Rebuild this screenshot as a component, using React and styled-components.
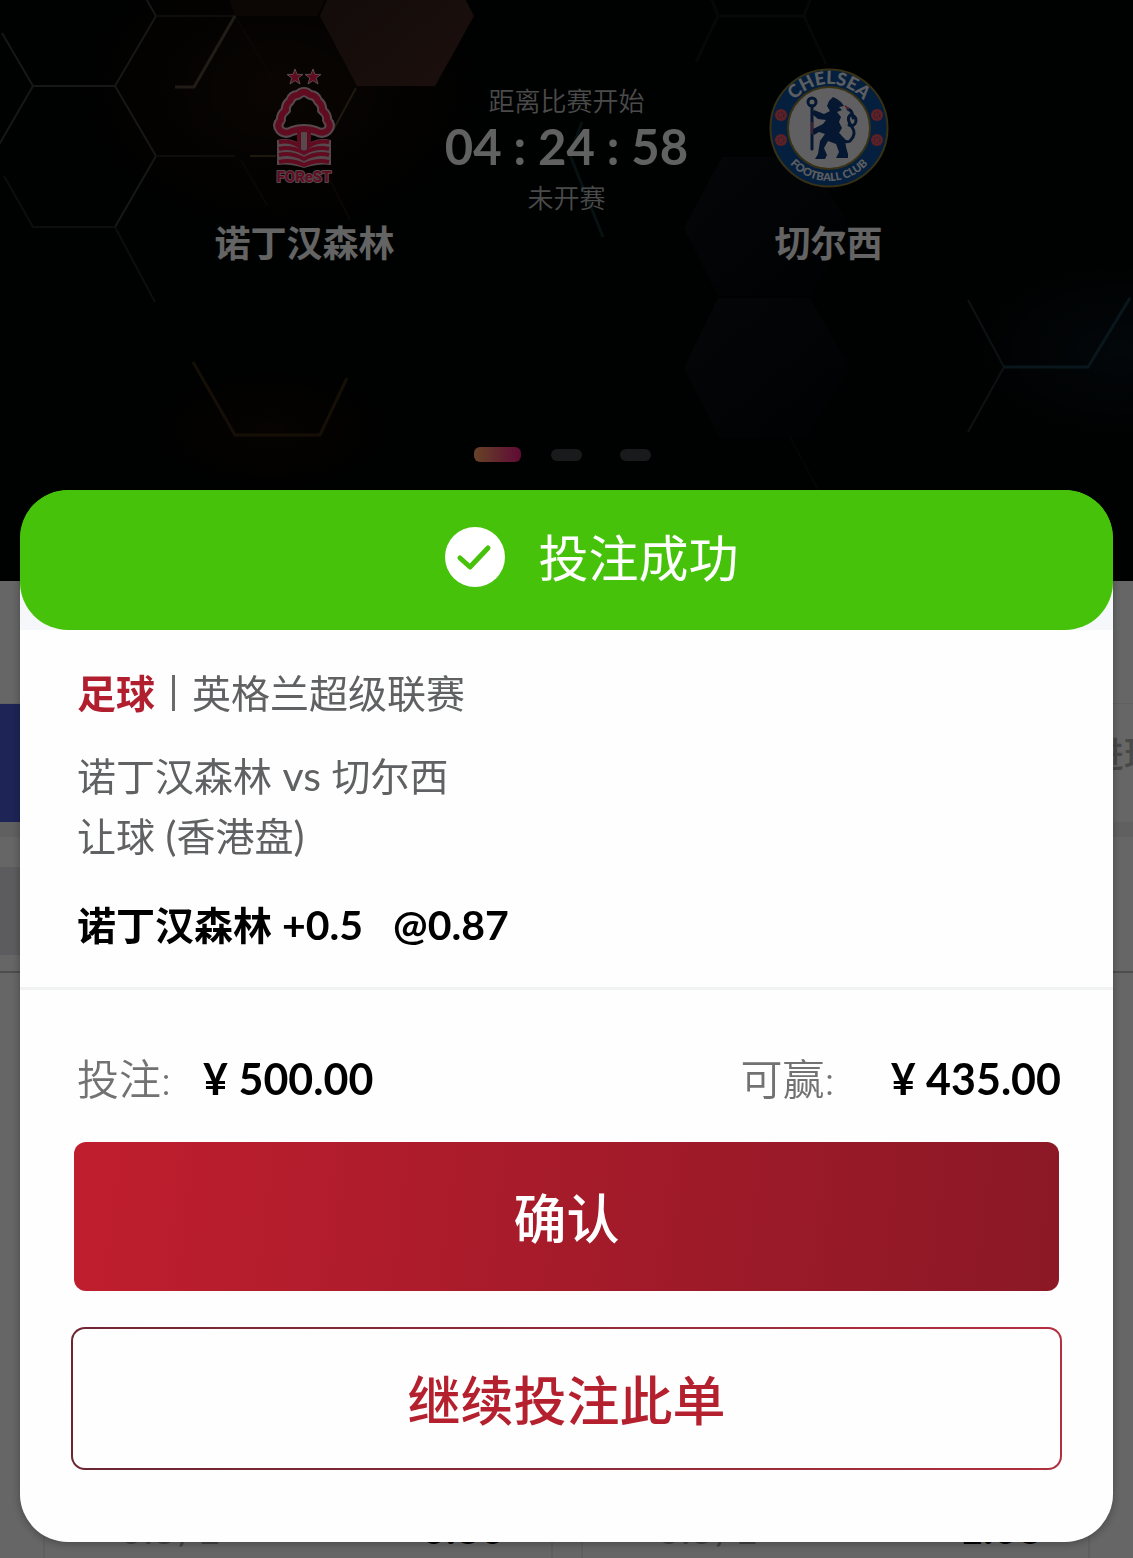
import React from "react";
import styled, { createGlobalStyle, css } from "styled-components";

const Global = createGlobalStyle`
  * { box-sizing: border-box; }
  html, body { margin: 0; padding: 0; background: #fff; }
  body {
    font-family: Lato, "Noto Sans CJK SC", sans-serif;
    overflow: hidden;
  }
  button { font-family: inherit; cursor: pointer; }
`;

const Page = styled.div`
  height: 100vh;
  overflow: hidden;
  background: #fff;
`;

/* ---------- match banner ---------- */

const Banner = styled.header`
  position: relative;
  height: 581px;
  background: #020303;
  color: #fff;
  display: flex;
  flex-direction: column;
  justify-content: space-between;
  padding: 68px 0 119px;
`;

const Backdrop = styled.svg`
  position: absolute;
  inset: 0;
  width: 100%;
  height: 100%;
`;

const MatchRow = styled.div`
  position: relative;
  display: grid;
  grid-template-columns: repeat(3, 262px);
  justify-content: center;
`;

const Team = styled.div`
  display: flex;
  flex-direction: column;
  align-items: center;
  gap: 31px;
  svg { width: 120px; height: 120px; }
`;

const TeamName = styled.h2`
  margin: 0;
  font-size: 36px;
  line-height: 48px;
  font-weight: 700;
  white-space: nowrap;
  color: #fbfbfb;
`;

const Countdown = styled.div`
  display: flex;
  flex-direction: column;
  align-items: center;
  padding-top: 14px;
`;

const Caption = styled.span`
  font-size: 26px;
  line-height: 38px;
  font-weight: 350;
  color: #b8b8b8;
`;

const Clock = styled.time`
  font-size: 49px;
  line-height: 52px;
  margin-bottom: 7px;
  font-weight: 700;
  color: #f2f2f2;
`;

const Dots = styled.div`
  position: relative;
  display: grid;
  grid-template-columns: repeat(3, 69px);
  justify-content: center;
  align-items: center;
  justify-items: center;
`;

const Dot = styled.button`
  border: 0;
  padding: 0;
  width: ${(p) => (p.$active ? 47 : 31)}px;
  height: ${(p) => (p.$active ? 15 : 12)}px;
  border-radius: 6px;
  background: ${(p) =>
    p.$active ? "linear-gradient(90deg, #ffa860, #ee1a84)" : "#404244"};
`;

/* ---------- odds page behind the dialog ---------- */

const Tabs = styled.nav`
  margin-top: 122px;
  height: 119px;
  display: flex;
  justify-content: space-between;
  border-top: 1px solid #efefef;
`;

const Tab = styled.button`
  display: flex;
  align-items: center;
  flex: none;
  border: 0;
  padding: 0;
  width: 172px;
  font-size: 36px;
  line-height: 48px;
  font-weight: 500;
  text-align: left;
  padding-bottom: 18px;
  background: ${(p) => (p.$active ? "#4a5cd6" : "transparent")};
  color: ${(p) => (p.$active ? "#fff" : "#b4b4b4")};
`;

const TabClip = styled.div`
  width: 45px;
  overflow: hidden;
  display: flex;
`;

const Strip = styled.div`
  height: 15px;
  background: #f0f0f1;
`;

const League = styled.div`
  margin-top: 30px;
  width: 50%;
  height: 88px;
  background: #e6e7ea;
`;

const Rule = styled.hr`
  margin: 16px 0 0;
  border: 0;
  height: 2px;
  background: #bcc0c5;
`;

const OddsGrid = styled.div`
  display: grid;
  grid-template-columns: 1fr 1fr;
  gap: 28px;
  padding: 0 43px;
`;

const OddsCard = styled.div`
  height: 640px;
  border: solid #ededee;
  border-width: 0 2px;
  display: flex;
  justify-content: space-between;
  align-items: baseline;
  padding: 529px 46px 0 74px;
  font-size: 42px;
  line-height: 52px;
  color: #a8a8a8;
  b { color: #000; font-weight: 900; }
`;

/* ---------- dialog ---------- */

const Overlay = styled.div`
  position: fixed;
  inset: 0;
  display: flex;
  align-items: flex-end;
  padding: 16px 20px;
  background: rgba(0, 0, 0, 0.6);
`;

const Dialog = styled.section`
  flex: 1;
  border-radius: 48px;
  background: linear-gradient(#45c209 70px, #f5f7fa 70px 140px, #fefefe 140px);
  box-shadow: 0 2px 10px rgba(0, 0, 0, 0.3);
  overflow: hidden;
`;

const DialogHeader = styled.header`
  display: flex;
  align-items: center;
  justify-content: center;
  gap: 34px;
  height: 140px;
  padding: 0 0 6px 50px;
  border-radius: 48px;
  background: #45c209;
  svg { width: 60px; height: 60px; }
`;

const Title = styled.h1`
  margin: 0;
  font-size: 50px;
  line-height: 60px;
  padding-top: 2px;
  font-weight: 400;
  color: #fff;
`;

const Details = styled.div`
  padding: 33px 57px 32px;
  border-bottom: 3px solid #f1f2f2;
  font-size: 39px;
  line-height: 60px;
  color: #606162;
`;

const Competition = styled.p`
  margin: 0 0 23px;
  display: flex;
  align-items: center;
  gap: 17px;
  strong { color: #b11f2e; }
`;

const Bar = styled.span`
  width: 3px;
  height: 36px;
  background: #6a6a6a;
`;

const Line = styled.p`
  margin: 0;
`;

const Latin = styled.span`
  font-size: 41px;
`;

const Pick = styled.p`
  margin: 29px 0 0;
  display: flex;
  align-items: baseline;
  gap: 30px;
  font-weight: 700;
  color: #000;
`;

const Amounts = styled.dl`
  margin: 0;
  padding: 59px 52px 0 57px;
  display: flex;
  justify-content: space-between;
  line-height: 60px;
`;

const Amount = styled.div`
  display: flex;
  align-items: baseline;
  gap: ${(p) => p.$gap}px;
  dt { font-size: 42px; color: #727272; font-weight: 350; }
  dd { margin: 0; font-size: 43px; font-weight: 700; color: #000; }
`;

const Actions = styled.div`
  display: flex;
  flex-direction: column;
  gap: 36px;
  padding: 33px 51px 72px;
`;

const buttonText = css`
  font-size: 53px;
  line-height: 72px;
  font-weight: 500;
  padding: 4px 0 0;
`;

const Confirm = styled.button`
  ${buttonText}
  height: 149px;
  margin: 0 3px;
  border: 0;
  border-radius: 12px;
  color: #fff;
  background: linear-gradient(97deg, #bf1e2e 2%, #8c1826 98%);
`;

const Continue = styled.button`
  ${buttonText}
  height: 143px;
  border: 2px solid transparent;
  border-radius: 14px;
  color: #b5202f;
  background:
    linear-gradient(#fefefe, #fefefe) padding-box,
    linear-gradient(60deg, #6b2532, #b5303f) border-box;
`;

/* ---------- drawings ---------- */

function Hexagons() {
  return (
    <Backdrop viewBox="0 0 1133 581" preserveAspectRatio="xMidYMin slice" fill="none" aria-hidden="true">
      <defs>
        <linearGradient id="warm" x1="0" y1="0" x2="1" y2="1">
          <stop offset="0" stopColor="#2c1d1a" />
          <stop offset="1" stopColor="#46281f" />
        </linearGradient>
        <linearGradient id="cool" x1="0" y1="0" x2="1" y2="1">
          <stop offset="0" stopColor="#0b1014" />
          <stop offset="1" stopColor="#020406" />
        </linearGradient>
        <radialGradient id="glow">
          <stop offset="0" stopColor="#1a0e07" />
          <stop offset="1" stopColor="#1a0e07" stopOpacity="0" />
        </radialGradient>
        <radialGradient id="blueGlow">
          <stop offset="0" stopColor="#07131a" />
          <stop offset="1" stopColor="#07131a" stopOpacity="0" />
        </radialGradient>
      </defs>
      <ellipse cx="280" cy="90" rx="200" ry="140" fill="url(#glow)" />
      <ellipse cx="270" cy="430" rx="120" ry="60" fill="url(#glow)" opacity=".6" />
      <ellipse cx="1120" cy="350" rx="150" ry="90" fill="url(#blueGlow)" />
      <path d="M222-20 235 16H317L335-20Z" fill="#1f120e" />
      <path d="M345-40 320 16 357 86H435L474 16 445-40Z" fill="url(#warm)" />
      <path d="M722 157H810L850 228 810 296H718L684 228Z" fill="url(#cool)" />
      <path d="M718 298H810L850 368 805 438H720L684 368Z" fill="url(#cool)" />
      <g stroke="#3a3a3a" strokeWidth="2">
        <path d="M2 33 33 86H115L156 16 144-5M33 86-4 150M115 86 156 156 115 227" />
        <path d="M156 16H235M156 156H235M115 227H33L4 176M115 227 155 302" stroke="#222" />
        <path d="M235 16 274 82M241 160 267 205M330 180 350 220" stroke="#1c110c" />
      </g>
      <path d="M235 16 194 87H175" stroke="#56473a" strokeWidth="3" />
      <path d="M356 88 332 132M250 156H276" stroke="#4f3e24" strokeWidth="2" />
      <path d="M193 362 235 435H320L347 378" stroke="#38260f" strokeWidth="3" />
      <path d="M710-5 718 16 696 62M718 16H804L826 64M804 16 812-5" stroke="#101214" strokeWidth="3" />
      <path d="M582 122 570 155 603 237" stroke="#112f2d" strokeWidth="3" />
      <path d="M968 300 1004 367 968 432" stroke="#202f33" strokeWidth="2" />
      <path d="M1004 367H1088L1130 298" stroke="#183a48" strokeWidth="3" />
      <path d="M790 437 826 505" stroke="#080d11" strokeWidth="2" />
    </Backdrop>
  );
}

const star = "M0-8 2-2.6H8L3.2 1 5 7 0 3.6-5 7-3.2 1-8-2.6H-2Z";
const canopy =
  "M53 27Q59 21 65 27 71 27 73 33 78 37 77 42 83 47 82 52 87 57 83 62 78 67 71 63 65 61 59 61 53 61 47 63 40 67 35 62 31 57 36 52 35 47 41 42 40 37 45 33 47 27 53 27Z";

function ForestCrest() {
  return (
    <svg viewBox="0 0 120 120" fill="none" role="img" aria-label="Nottingham Forest">
      <g fill="#f01c52" stroke="#e0bcc8" strokeWidth="1">
        <path transform="translate(50 9)" d={star} />
        <path transform="translate(68 9)" d={star} />
      </g>
      <g strokeLinejoin="round">
        <path d={canopy} stroke="#d8b6c2" strokeWidth="10" />
        <path d="M32 72Q43 69 52 74V62H66V74Q75 69 86 72V97Q73 95 59 100 45 95 32 97Z" fill="#d8b6c2" />
        <path d={canopy} stroke="#f01c52" strokeWidth="6" />
      </g>
      <path d="M34 74Q45 72 54 78V62M64 62V78Q73 72 84 74" stroke="#f01c52" strokeWidth="4" />
      <path d="M34 81Q46 78 59 85 72 78 84 81M34 87Q46 84 59 91 72 84 84 87M34 94Q46 91 59 97 72 91 84 94" stroke="#f01c52" strokeWidth="4" />
      <text
        x="59"
        y="114"
        textAnchor="middle"
        fontFamily="Roboto"
        fontSize="15"
        fontWeight="700"
        fill="#f01c52"
        stroke="#d8b6c2"
        strokeWidth="2"
        strokeLinejoin="round"
        paintOrder="stroke"
      >
        FOReST
      </text>
    </svg>
  );
}

function Rosette({ x, y }) {
  return (
    <g transform={`translate(${x} ${y})`}>
      <circle r="6" fill="#f05058" />
      <circle r="3" stroke="#2c58a8" strokeWidth="1" strokeDasharray="2 1.4" />
    </g>
  );
}

function ChelseaCrest() {
  return (
    <svg viewBox="0 0 120 120" fill="none" role="img" aria-label="Chelsea Football Club">
      <defs>
        <path id="arcTop" d="M16 60A44 44 0 0 1 104 60" />
        <path id="arcBottom" d="M7 60A53 53 0 0 0 113 60" />
      </defs>
      <circle cx="60" cy="60" r="58.5" fill="#0d4e9c" stroke="#8a7a35" strokeWidth="2" />
      <circle cx="60" cy="60" r="41" fill="#f0f0f6" stroke="#8a7a35" strokeWidth="2" />
      <g fill="#e8ecf0" fontFamily="Lato" fontWeight="900" textAnchor="middle">
        <text fontSize="18"><textPath href="#arcTop" startOffset="50%">CHELSEA</textPath></text>
        <text fontSize="11"><textPath href="#arcBottom" startOffset="50%">FOOTBALL CLUB</textPath></text>
      </g>
      <Rosette x={12} y={47} />
      <Rosette x={12} y={72} />
      <Rosette x={108} y={47} />
      <Rosette x={108} y={72} />
      <g stroke="#0d3a7c" strokeLinejoin="round" strokeLinecap="round">
        <circle cx="43" cy="34" r="4" strokeWidth="3" />
        <path d="M43 38V81" strokeWidth="3" />
        <path d="M81 73Q88 66 83 59 77 51 81 47 87 47 87 53 86 59 80 57M81 73Q75 76 70 67M84 50Q84 43 79 41" strokeWidth="3" />
      </g>
      <path d="M60 33 64 29 68 31 72 34 75 38 70 39 73 42 68 44 72 49 70 54 73 60 70 65 76 71 77 79 79 86V90H67L70 84 67 76 59 73 55 80 58 87 56 91H46L49 86 51 73 56 66 50 64 45 67 42 62 54 56 57 52 49 51 43 46 45 42 55 46 61 43 58 38Z" fill="#0d3a7c" />
      <path d="M43 54V66M76 38 80 41" stroke="#d75068" strokeWidth="1.6" />
    </svg>
  );
}

function CheckBadge() {
  return (
    <svg viewBox="0 0 60 60" fill="none" aria-hidden="true">
      <circle cx="30" cy="30" r="30" fill="#fff" />
      <path d="M15 31 25 40 43 21" stroke="#45c209" strokeWidth="5" strokeLinecap="round" strokeLinejoin="round" />
    </svg>
  );
}

const odds = [
  { id: "home", handicap: "0.5/1", price: "0.80" },
  { id: "away", handicap: "0.5/1", price: "1.08" },
];

export default function App() {
  return (
    <>
      <Global />
      <Page>
        <Banner>
          <Hexagons />
          <MatchRow>
            <Team>
              <ForestCrest />
              <TeamName>诺丁汉森林</TeamName>
            </Team>
            <Countdown>
              <Caption>距离比赛开始</Caption>
              <Clock>04 : 24 : 58</Clock>
              <Caption>未开赛</Caption>
            </Countdown>
            <Team>
              <ChelseaCrest />
              <TeamName>切尔西</TeamName>
            </Team>
          </MatchRow>
          <Dots>
            <Dot $active aria-label="1" />
            <Dot aria-label="2" />
            <Dot aria-label="3" />
          </Dots>
        </Banner>
        <Tabs>
          <Tab $active aria-label="全部" />
          <TabClip>
            <Tab>进球</Tab>
          </TabClip>
        </Tabs>
        <Strip />
        <League />
        <Rule />
        <OddsGrid>
          {odds.map((o) => (
            <OddsCard key={o.id}>
              <span>{o.handicap}</span>
              <b>{o.price}</b>
            </OddsCard>
          ))}
        </OddsGrid>
      </Page>
      <Overlay>
        <Dialog role="dialog" aria-labelledby="dialog-title">
          <DialogHeader>
            <CheckBadge />
            <Title id="dialog-title">投注成功</Title>
          </DialogHeader>
          <Details>
            <Competition>
              <strong>足球</strong>
              <Bar />
              <span>英格兰超级联赛</span>
            </Competition>
            <Line>
              诺丁汉森林<Latin> vs </Latin>切尔西
            </Line>
            <Line>
              让球<Latin> (</Latin>香港盘<Latin>)</Latin>
            </Line>
            <Pick>
              <span>
                诺丁汉森林<Latin> +0.5</Latin>
              </span>
              <Latin>@0.87</Latin>
            </Pick>
          </Details>
          <Amounts>
            <Amount $gap={32}>
              <dt>投注:</dt>
              <dd>¥ 500.00</dd>
            </Amount>
            <Amount $gap={56}>
              <dt>可赢:</dt>
              <dd>¥ 435.00</dd>
            </Amount>
          </Amounts>
          <Actions>
            <Confirm type="button">确认</Confirm>
            <Continue type="button">继续投注此单</Continue>
          </Actions>
        </Dialog>
      </Overlay>
    </>
  );
}
